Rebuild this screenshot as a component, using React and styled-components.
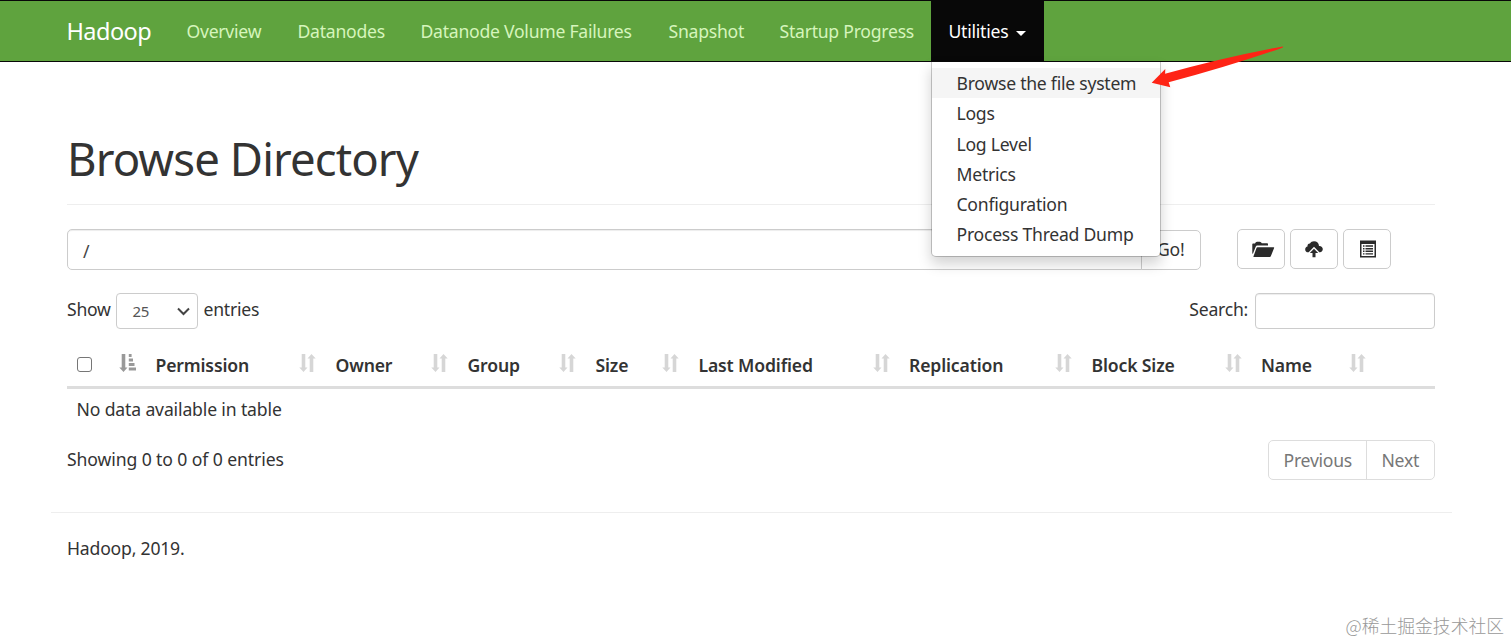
import React from 'react';
import styled, { createGlobalStyle, css } from 'styled-components';

const GlobalStyle = createGlobalStyle`
  * { box-sizing: border-box; }
  body {
    margin: 0;
    background: #fff;
    color: #333;
    font-family: "Noto Sans", "Open Sans", "Noto Sans CJK SC", sans-serif;
    font-size: 17.6px;
    line-height: 22px;
    letter-spacing: -0.25px;
    overflow: hidden;
  }
`;

const Page = styled.div`
  position: relative;
  height: 643px;
`;

const Navbar = styled.nav`
  display: flex;
  height: 62px;
  padding-left: 49px;
  background: #5fa33e;
  border-top: 1px solid #080808;
  border-bottom: 1px solid #080808;
`;

const Brand = styled.a`
  width: 120px;
  padding: 18px 0 0 17.5px;
  color: #fff;
  font-size: 23.5px;
  line-height: 24px;
  letter-spacing: -0.55px;
`;

const NavItem = styled.div`
  position: relative;
  width: ${({ $width }) => $width}px;
  padding: 19px 0 0 17.5px;
  color: #d6f5bc;
  white-space: nowrap;
  ${({ $open }) => $open && css`
    background: #080808;
    color: #fff;
  `}
`;

const Caret = styled.span`
  display: inline-block;
  margin-left: 8px;
  vertical-align: middle;
  border-top: 5px solid #fff;
  border-left: 5px solid transparent;
  border-right: 5px solid transparent;
`;

const Menu = styled.ul`
  position: absolute;
  z-index: 10;
  top: 61px;
  left: 0;
  width: 230px;
  height: 195px;
  margin: 0;
  padding: 6px 0;
  list-style: none;
  background: #fff;
  border: 1px solid rgba(0, 0, 0, 0.2);
  border-top: 0;
  border-radius: 0 0 5px 5px;
  background-clip: padding-box;
  box-shadow: 0 7px 14px rgba(0, 0, 0, 0.175);
`;

const MenuItem = styled.li`
  height: 30.25px;
  padding: 4px 24px 0 24.5px;
  color: #333;
  background: ${({ $active }) => ($active ? '#f5f5f5' : 'transparent')};
`;

const Content = styled.main`
  margin: 0 76px 0 67px;
`;

const Title = styled.h1`
  height: 143px;
  margin: 0;
  padding-top: 70px;
  border-bottom: 1px solid #eee;
  font-size: 45.5px;
  font-weight: 400;
  line-height: 52px;
  letter-spacing: -0.9px;
`;

const Toolbar = styled.div`
  display: flex;
  height: 41px;
  margin-top: 24px;
`;

const PathInput = styled.div`
  width: 1075px;
  height: 41px;
  padding: 10px 15px;
  border: 1px solid #ccc;
  border-radius: 5px 0 0 5px;
  box-shadow: inset 0 1px 1px rgba(0, 0, 0, 0.075);
  color: #444;
`;

const GoButton = styled.div`
  width: 60px;
  height: 40px;
  margin: 1px 36px 0 -1px;
  padding: 7px 15px;
  border: 1px solid #ccc;
  border-radius: 0 5px 5px 0;
`;

const IconButton = styled.div`
  display: flex;
  align-items: center;
  justify-content: center;
  width: 48px;
  height: 40px;
  margin-right: 5px;
  padding-left: ${({ $shift }) => $shift || 0}px;
  border: 1px solid #ccc;
  border-radius: 5px;
`;

const Controls = styled.div`
  display: flex;
  align-items: flex-start;
  height: 36px;
  margin-top: 23px;
`;

const Label = styled.span`
  margin: 5px 0 0;
`;

const Select = styled.div`
  display: flex;
  align-items: center;
  justify-content: space-between;
  width: 82px;
  height: 36px;
  margin: 0 6px 0 auto;
  padding: 0 7px 0 16px;
  border: 1px solid #ccc;
  border-radius: 4px;
  color: #555;
  font-size: 15px;
`;

const Length = styled.div`
  display: flex;
  width: 136.5px;
`;

const SearchLabel = styled(Label)`
  margin-left: auto;
  margin-right: 7px;
`;

const SearchInput = styled.div`
  width: 180px;
  height: 36px;
  border: 1px solid #ccc;
  border-radius: 4px;
  box-shadow: inset 0 1px 1px rgba(0, 0, 0, 0.075);
`;

const TableHead = styled.div`
  display: grid;
  grid-template-columns: 79px 180px 132px 128px 103px 210.5px 182.5px 169.5px 124.5px 1fr;
  height: 60px;
  border-bottom: 3px solid #ddd;
`;

const HeadCell = styled.div`
  display: flex;
  justify-content: space-between;
  padding: 25px 10px 0 9.5px;
  font-weight: 650;
  letter-spacing: -0.15px;
  white-space: nowrap;

  svg {
    flex: none;
  }
`;

const Checkbox = styled.span`
  width: 15px;
  height: 15px;
  margin-top: 3px;
  border: 1.5px solid #767676;
  border-radius: 3px;
`;

const EmptyRow = styled.div`
  padding: 9px 9.5px 0;
  height: 51px;
  letter-spacing: -0.15px;
`;

const TableFoot = styled.div`
  display: flex;
  justify-content: space-between;
  height: 72px;
`;

const Info = styled.div`
  padding-top: 8px;
  letter-spacing: -0.1px;
`;

const Pager = styled.div`
  display: flex;
  height: 40px;
  border: 1px solid #ddd;
  border-radius: 5px;
  color: #777;
`;

const PageLink = styled.span`
  width: ${({ $width }) => $width}px;
  padding: 8px 0 0 14.5px;

  & + & {
    border-left: 1px solid #ddd;
  }
`;

const Footer = styled.footer`
  margin: 0 59px 0 51px;
  padding: 24px 16px;
  border-top: 1px solid #eee;
  letter-spacing: -0.2px;
`;

const Watermark = styled.div`
  position: absolute;
  right: 7px;
  bottom: 7px;
  color: #999;
  font-family: "Noto Sans CJK SC", sans-serif;
  font-size: 17.8px;
  font-weight: 300;
  letter-spacing: 0;
`;

const Pointer = styled.svg`
  position: absolute;
  z-index: 20;
  left: 1150px;
  top: 44px;
`;

const FolderOpenIcon = () => (
  <svg width="24" height="18" viewBox="0 0 24 18" fill="#2b2b2b">
    <path d="M1.300 13.500V4.200q0-.7.7-.7H4q.6-1.800 2-1.800h2.800q1.400 0 2 1.500h5.400q.8 0 .8.8v1.600H6.200q-1 0-1.400 1L1.900 13.800z" />
    <path d="M6.400 7.200h16.200q.8 0 .5.8l-3.300 8.300q-.3.7-1 .7H3q-.8 0-.5-.7l3-8.400q.2-.7.9-.7z" />
  </svg>
);

const CloudUploadIcon = () => (
  <svg width="20" height="18" viewBox="0 0 20 18" fill="#2b2b2b">
    <path d="M4.700 12.300H4.200C2.400 12.300 1.200 11 1.200 9.400c0-1.500 1-2.600 2.300-2.900C3.300 4.500 4.400 3.400 6 3.500 6.800 2 8.300 1.200 10 1.200c2.900 0 4.900 2 5 4.700 2.200-.2 3.800 1.200 3.800 3.100 0 1.900-1.200 3.300-2.900 3.300h-.6L10 6.700z" />
    <path d="M10 8.700 14.200 13h-2.700v4.200h-3V13H5.800z" />
  </svg>
);

const ListIcon = () => (
  <svg width="18" height="18" viewBox="0 0 18 18" fill="#2b2b2b">
    <path fillRule="evenodd" d="M1 .6h16v16.800H1zM2.500 4v12h13V4z" />
    <path d="M4 5.300h1.500v1.400H4zm2.500 0H14v1.400H6.500zM4 8h1.500v1.400H4zm2.500 0H14v1.400H6.500zM4 10.600h1.500V12H4zm2.500 0H14V12H6.500zM4 13.200h1.500v1.400H4zm2.500 0H14v1.400H6.500z" />
  </svg>
);

const SortIcon = () => (
  <svg width="17" height="18" viewBox="0 0 17 18" fill="#d6d6d6">
    <path d="M2.700 0h3.600v13.500h2.200L4.500 18 .3 13.500h2.400z" />
    <path d="M10.700 18h3.600V4.500h2.400L12.500 0 8.500 4.500h2.200z" />
  </svg>
);

const SortAscIcon = () => (
  <svg width="17" height="18" viewBox="0 0 17 18" fill="#999">
    <path d="M2.700 0h3.600v13.500h2.200L4.500 18 .3 13.500h2.400z" />
    <path d="M9.800 0h2.800v3H9.800zm0 4.500h4.200v3H9.800zm0 4.500h5.700v3H9.800zm0 4.500H17v3H9.800z" />
  </svg>
);

const ChevronIcon = () => (
  <svg width="13" height="9" viewBox="0 0 13 9" fill="none" stroke="#444" strokeWidth="2">
    <path d="M1 1.500 6.500 7 12 1.500" />
  </svg>
);

const navItems = [
  { label: 'Overview', width: 111 },
  { label: 'Datanodes', width: 123 },
  { label: 'Datanode Volume Failures', width: 248 },
  { label: 'Snapshot', width: 111 },
  { label: 'Startup Progress', width: 169 },
];

const menuItems = [
  'Browse the file system',
  'Logs',
  'Log Level',
  'Metrics',
  'Configuration',
  'Process Thread Dump',
];

const columns = [
  'Permission',
  'Owner',
  'Group',
  'Size',
  'Last Modified',
  'Replication',
  'Block Size',
  'Name',
];

const App = () => {
  return (
    <Page>
      <GlobalStyle />
      <Navbar>
        <Brand>Hadoop</Brand>
        {navItems.map(({ label, width }) => (
          <NavItem key={label} $width={width}>{label}</NavItem>
        ))}
        <NavItem $width={113} $open>
          Utilities
          <Caret />
          <Menu>
            {menuItems.map((item, i) => (
              <MenuItem key={item} $active={i === 0}>{item}</MenuItem>
            ))}
          </Menu>
        </NavItem>
      </Navbar>
      <Content>
        <Title>Browse Directory</Title>
        <Toolbar>
          <PathInput>/</PathInput>
          <GoButton>Go!</GoButton>
          <IconButton $shift={3}><FolderOpenIcon /></IconButton>
          <IconButton><CloudUploadIcon /></IconButton>
          <IconButton $shift={2}><ListIcon /></IconButton>
        </Toolbar>
        <Controls>
          <Length>
            <Label>Show</Label>
            <Select>
              25
              <ChevronIcon />
            </Select>
          </Length>
          <Label>entries</Label>
          <SearchLabel>Search:</SearchLabel>
          <SearchInput />
        </Controls>
        <TableHead>
          <HeadCell>
            <Checkbox />
            <SortAscIcon />
          </HeadCell>
          {columns.map((name) => (
            <HeadCell key={name}>
              {name}
              <SortIcon />
            </HeadCell>
          ))}
        </TableHead>
        <EmptyRow>No data available in table</EmptyRow>
        <TableFoot>
          <Info>Showing 0 to 0 of 0 entries</Info>
          <Pager>
            <PageLink $width={97}>Previous</PageLink>
            <PageLink $width={68}>Next</PageLink>
          </Pager>
        </TableFoot>
      </Content>
      <Footer>Hadoop, 2019.</Footer>
      <Watermark>@稀土掘金技术社区</Watermark>
      <Pointer width="136" height="46" viewBox="0 0 136 46" fill="#fe2415">
        <path d="M1.700 38.700 15.300 25 15.100 29.800 Q75 13 132.500 2.500 Q134.500 3 131 4.200 Q80 22 18.700 38.300 L20.300 43.300z" />
      </Pointer>
    </Page>
  );
};

export default App;
